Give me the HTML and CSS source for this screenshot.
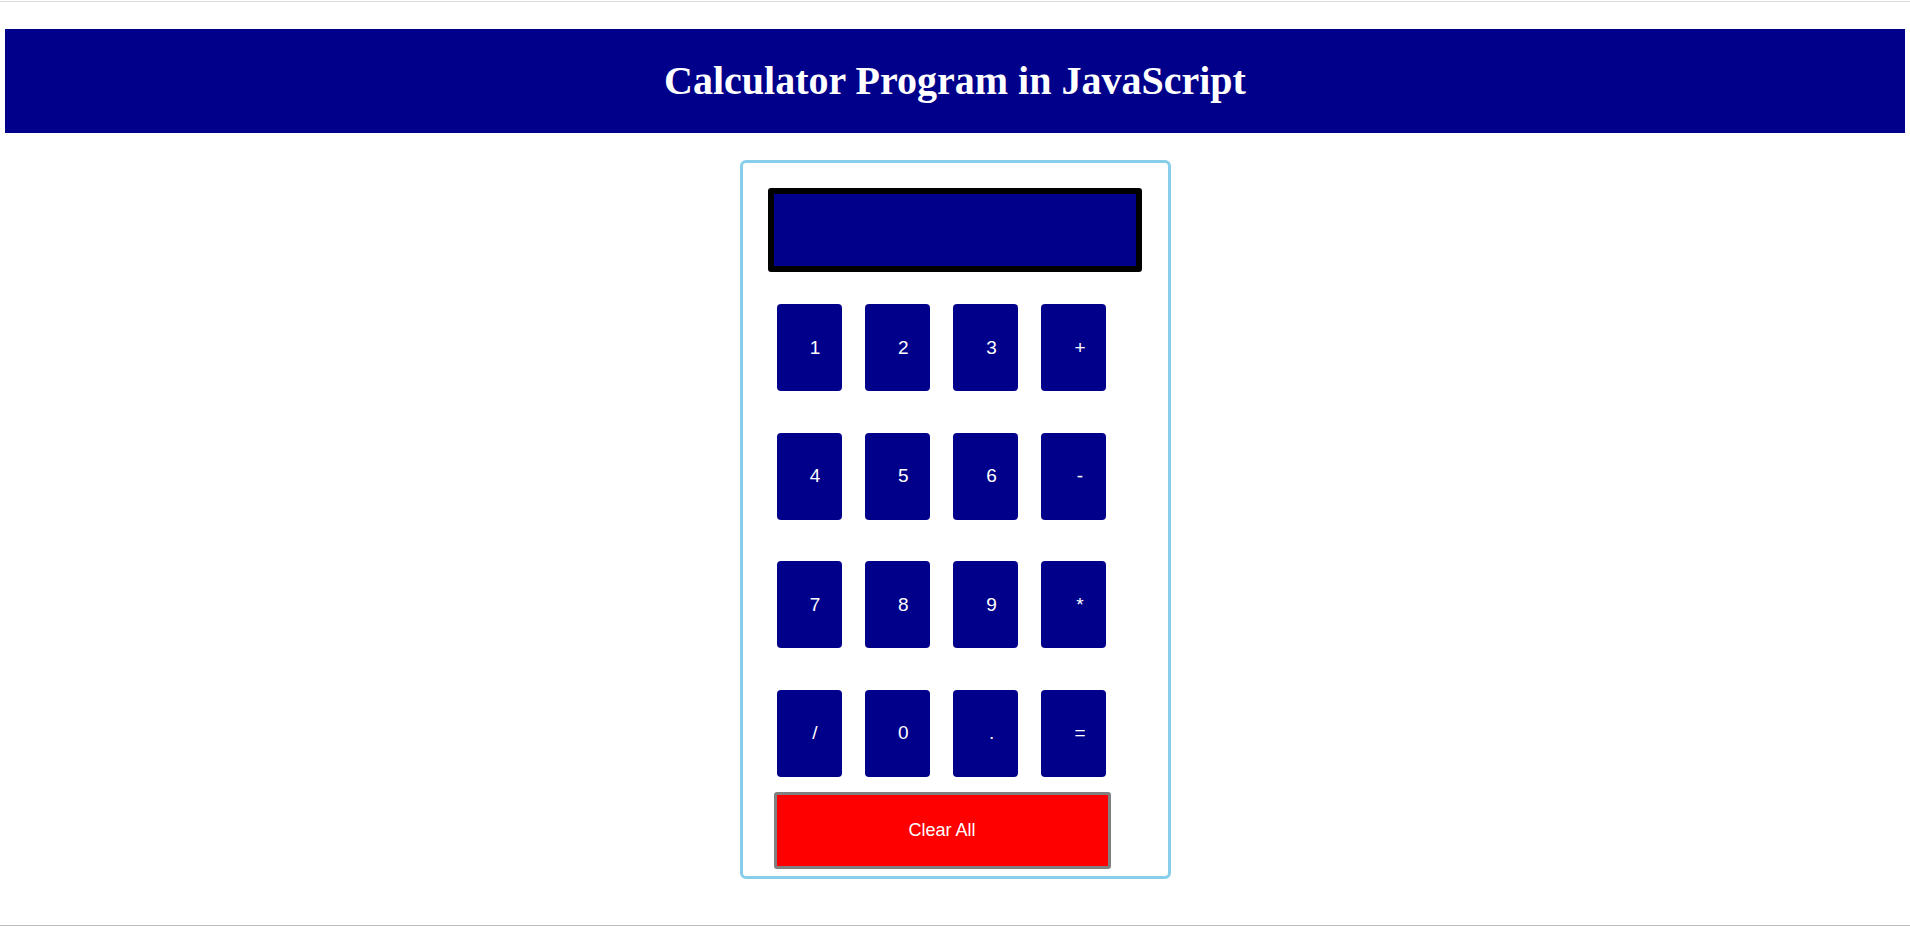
FILE: index.html
```html
<!DOCTYPE html>
<html lang="en">
<head>
    <meta charset="UTF-8">
    <meta name="viewport" content="width=device-width, initial-scale=1.0">
    <title>Calculator Program in JavaScript</title>
    <link rel="stylesheet" href="styles.css">
</head>
<body>
    <div class="top-line"></div>

    <header class="title-bar">
        <h1>Calculator Program in JavaScript</h1>
    </header>

    <div class="calculator">
        <input type="text" class="display" id="display" readonly>

        <div class="keys">
            <button class="key">1</button>
            <button class="key">2</button>
            <button class="key">3</button>
            <button class="key">+</button>

            <button class="key">4</button>
            <button class="key">5</button>
            <button class="key">6</button>
            <button class="key">-</button>

            <button class="key">7</button>
            <button class="key">8</button>
            <button class="key">9</button>
            <button class="key">*</button>

            <button class="key">/</button>
            <button class="key">0</button>
            <button class="key">.</button>
            <button class="key">=</button>
        </div>

        <button class="clear-btn" id="clear">Clear All</button>
    </div>

    <div class="bottom-line"></div>
</body>
</html>
```

FILE: styles.css
```css
body {
    margin: 0;
    padding: 0 5px;
    font-family: "Liberation Sans", Arial, sans-serif;
    background-color: #fff;
}
.top-line {
    margin: 1px -5px 0;
    height: 1px;
    background-color: #dddddd;
}
.title-bar {
    margin-top: 27px;
    height: 104px;
    background-color: #00008b;
    display: flex;
    align-items: center;
    justify-content: center;
}
h1 {
    margin: 0;
    font-family: "Liberation Serif", "Times New Roman", serif;
    font-size: 40px;
    font-weight: bold;
    color: #fff;
    line-height: 1;
}
.calculator {
    box-sizing: border-box;
    width: 431px;
    height: 719px;
    margin: 27px auto 0;
    padding: 25px 26px 7px 25px;
    border: 3px solid #87ceeb;
    border-radius: 6px;
}
.display {
    display: block;
    box-sizing: border-box;
    width: 374px;
    height: 84px;
    margin: 0;
    padding: 0 10px;
    border: 6px solid #000;
    border-radius: 3px;
    background-color: #00008b;
    color: #fff;
    font-size: 24px;
    outline: none;
}
.keys {
    display: grid;
    grid-template-columns: repeat(4, 65px);
    column-gap: 23.33px;
    row-gap: 41.67px;
    margin: 32px 0 0 9px;
}
.key {
    width: 65px;
    height: 87px;
    padding: 0 0 0 12px;
    border: none;
    border-radius: 4px;
    background-color: #00008b;
    color: #fff;
    font-family: "Liberation Sans", Arial, sans-serif;
    font-size: 19px;
    cursor: pointer;
}
.clear-btn {
    display: block;
    box-sizing: border-box;
    width: 337px;
    height: 77px;
    margin: 15px 0 0 6px;
    border: 3px solid #808080;
    border-radius: 3px;
    background-color: #ff0000;
    color: #fff;
    font-family: "Liberation Sans", Arial, sans-serif;
    font-size: 18px;
    cursor: pointer;
}
.bottom-line {
    margin: 46px -5px 0;
    height: 1px;
    background-color: #bbbbbb;
}
```
